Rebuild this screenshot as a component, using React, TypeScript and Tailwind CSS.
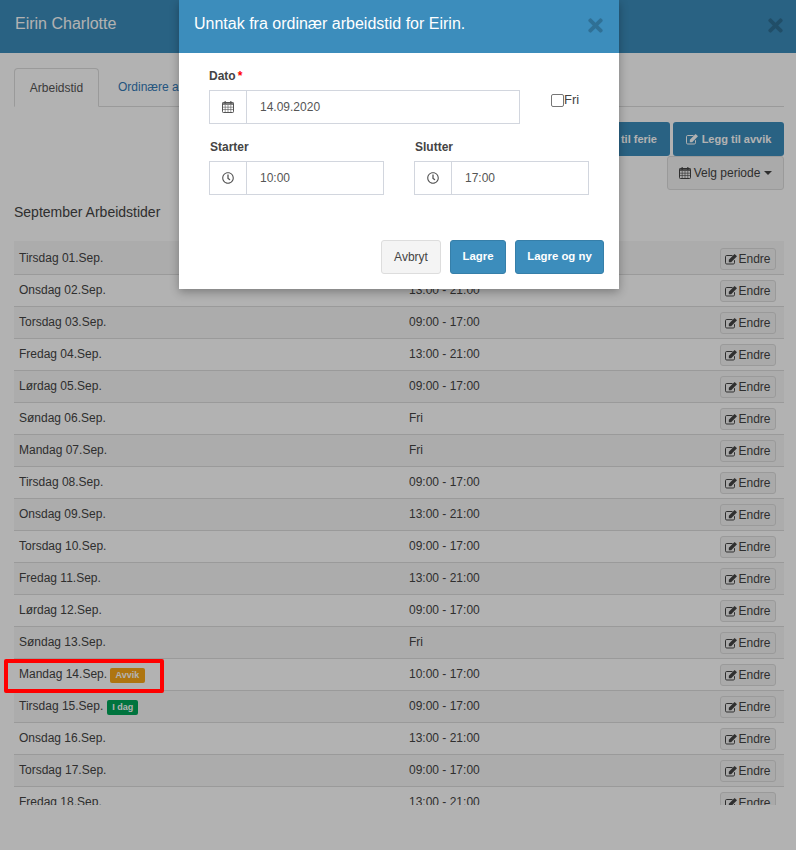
import React from "react";
import { FaRegClock, FaTimes } from "react-icons/fa";

const rows: [string, string, string?][] = [
  ["Tirsdag 01.Sep.", "09:00 - 17:00"],
  ["Onsdag 02.Sep.", "13:00 - 21:00"],
  ["Torsdag 03.Sep.", "09:00 - 17:00"],
  ["Fredag 04.Sep.", "13:00 - 21:00"],
  ["Lørdag 05.Sep.", "09:00 - 17:00"],
  ["Søndag 06.Sep.", "Fri"],
  ["Mandag 07.Sep.", "Fri"],
  ["Tirsdag 08.Sep.", "09:00 - 17:00"],
  ["Onsdag 09.Sep.", "13:00 - 21:00"],
  ["Torsdag 10.Sep.", "09:00 - 17:00"],
  ["Fredag 11.Sep.", "13:00 - 21:00"],
  ["Lørdag 12.Sep.", "09:00 - 17:00"],
  ["Søndag 13.Sep.", "Fri"],
  ["Mandag 14.Sep.", "10:00 - 17:00", "avvik"],
  ["Tirsdag 15.Sep.", "09:00 - 17:00", "idag"],
  ["Onsdag 16.Sep.", "13:00 - 21:00"],
  ["Torsdag 17.Sep.", "09:00 - 17:00"],
  ["Fredag 18.Sep.", "13:00 - 21:00"],
];

function CalendarIcon() {
  return (
    <svg width="12" height="12" viewBox="0 0 12 12" className="shrink-0">
      <rect x="0.5" y="1.5" width="11" height="10" rx="0.8" fill="none" stroke="currentColor" />
      <rect x="0.5" y="1.5" width="11" height="2.5" fill="currentColor" opacity="0.75" />
      <path d="M0.5 6.2H11.5M0.5 8.5H11.5M3.2 4V11.5M6 4V11.5M8.8 4V11.5" stroke="currentColor" strokeWidth="0.8" fill="none" opacity="0.75" />
      <path d="M3.2 0.3V2.8M8.8 0.3V2.8" stroke="currentColor" strokeWidth="1.5" fill="none" />
    </svg>
  );
}

function EditIcon() {
  return (
    <svg width="13" height="12" viewBox="0 0 13 12" className="shrink-0">
      <path d="M9.5 7.2V9.8A1.2 1.2 0 0 1 8.3 11H1.7A1.2 1.2 0 0 1 0.5 9.8V3.7A1.2 1.2 0 0 1 1.7 2.5H7.5" fill="none" stroke="currentColor" />
      <path d="M3.8 6.8L9.6 1L12 3.3L6.2 9.2H3.8Z" fill="currentColor" />
    </svg>
  );
}

function Field({ icon, value, className }: { icon: React.ReactNode; value: string; className: string }) {
  return (
    <div className={`flex h-[34px] border border-[#d2d6de] ${className}`}>
      <div className="flex w-[37px] items-center justify-center border-r border-[#d2d6de] text-[12px] text-[#555555]">{icon}</div>
      <div className="flex items-center pl-[13px] text-[12px] text-[#555555]">{value}</div>
    </div>
  );
}

export default function App() {
  return (
    <div className="relative h-[850px] w-[796px] overflow-hidden bg-white font-['Liberation_Sans',Arial,sans-serif] text-[12px] text-[#444444]">
      <header className="flex h-[53px] items-center justify-between bg-[#3c8dbc] pb-[6px] pl-[15px] pr-[10px] text-white">
        <h1 className="text-[16px] font-normal">Eirin Charlotte</h1>
        <FaTimes className="mt-[4px] text-[21px] text-black opacity-20" />
      </header>

      <div className="px-[14px] pr-[12px]">
        <nav className="mt-[15px] flex h-[39px] border-b border-[#dddddd]">
          <div className="flex h-[39px] w-[85px] items-center justify-center rounded-t border border-b-white border-[#dddddd] bg-white text-[#555555]">Arbeidstid</div>
          <div className="flex h-[38px] items-center pl-[19px] text-[#337ab7]">Ordinære arbeidstider</div>
        </nav>

        <div className="mt-[15px] flex flex-col items-end">
          <div className="flex gap-[3px]">
            <button className="flex h-[34px] w-[120px] items-center justify-end rounded-[3px] bg-[#3c8dbc] pr-[13px] text-[11px] font-bold text-white">Legg til ferie</button>
            <button className="flex h-[34px] w-[111px] items-center justify-center gap-[3px] rounded-[3px] bg-[#3c8dbc] text-[11px] font-bold text-white">
              <EditIcon />
              Legg til avvik
            </button>
          </div>
          <button className="flex h-[34px] w-[117px] items-center justify-center gap-[3px] rounded-[3px] border border-[#dddddd] bg-[#f4f4f4] text-[#444444]">
            <CalendarIcon />
            Velg periode
            <span className="ml-[1px] h-0 w-0 border-x-[4px] border-t-[4px] border-x-transparent border-t-[#444444]" />
          </button>
        </div>

        <h2 className="mt-[14px] text-[14px] font-normal leading-[16px]">September Arbeidstider</h2>

        <div className="mt-[21px] h-[564px] overflow-hidden">
          <div className="h-[2px] bg-[#f7f7f7]" />
          {rows.map(([day, time, tag], i) => (
            <div key={day} className={`flex h-[32px] border-b border-[#dddddd] pl-[5px] pr-[8px] ${i % 2 === 0 ? "bg-[#f7f7f7]" : "bg-white"}`}>
              <div className="flex w-[390px] items-start pt-[8px] leading-[14px]">
                <span>{day}</span>
                {tag === "avvik" && <span className="ml-[3px] mt-[1px] rounded-[2px] bg-[#f9a818] px-[5.5px] py-[1px] text-[9px] font-bold leading-[13px] text-white">Avvik</span>}
                {tag === "idag" && <span className="ml-[4px] mt-[1px] rounded-[2px] bg-[#00a65a] px-[5px] py-[1px] text-[9px] font-bold leading-[13px] text-white">I dag</span>}
              </div>
              <div className="flex-1 pt-[8px] leading-[14px]">{time}</div>
              <button className="mt-[5px] flex h-[22px] w-[56px] items-center justify-center rounded-[3px] border border-[#dddddd] bg-[#f4f4f4] text-[#444444]">
                <EditIcon />
                Endre
              </button>
            </div>
          ))}
        </div>
      </div>

      <div className="absolute inset-0 bg-[rgba(0,0,0,0.3)]" />

      <div className="absolute left-[4px] top-[659px] h-[34px] w-[160px] rounded-[2px] border-[4px] border-[#ff0000]" />

      <div className="absolute left-[179px] top-0 w-[440px] bg-white text-[#333333] shadow-[0_3px_9px_rgba(0,0,0,0.3)]">
        <div className="flex h-[53px] items-center justify-between bg-[#3c8dbc] pb-[6px] pl-[15px] pr-[13px] text-white">
          <h3 className="text-[16px] font-normal">Unntak fra ordinær arbeidstid for Eirin.</h3>
          <FaTimes className="mt-[4px] text-[21px] text-black opacity-20" />
        </div>
        <div className="px-[30px] pt-[16px]">
          <div className="flex">
            <div>
              <label className="block h-[21px] font-bold leading-[14px] text-[#444444]">
                Dato<span className="ml-[2px] text-[#ff0000]">*</span>
              </label>
              <Field icon={<CalendarIcon />} value="14.09.2020" className="w-[311px]" />
            </div>
            <label className="ml-[31px] mt-[24px] flex h-[14px] items-center text-[13px] text-[#444444]">
              <span className="h-[13px] w-[13px] rounded-[2px] border border-[#767676] bg-white" />
              Fri
            </label>
          </div>
          <div className="mt-[16px] flex gap-[30px]">
            <div>
              <label className="block h-[21px] pl-[1px] font-bold leading-[14px] text-[#444444]">Starter</label>
              <Field icon={<FaRegClock />} value="10:00" className="w-[175px]" />
            </div>
            <div>
              <label className="block h-[21px] pl-[1px] font-bold leading-[14px] text-[#444444]">Slutter</label>
              <Field icon={<FaRegClock />} value="17:00" className="w-[175px]" />
            </div>
          </div>
        </div>
        <div className="mt-[45px] flex justify-end gap-[9px] pb-[15px] pr-[15px]">
          <button className="h-[34px] w-[60px] rounded-[3px] border border-[#dddddd] bg-[#f4f4f4] text-[#444444]">Avbryt</button>
          <button className="h-[34px] w-[56px] rounded-[3px] border border-[#367fa9] bg-[#3c8dbc] text-[11.4px] font-bold text-white">Lagre</button>
          <button className="h-[34px] w-[89px] rounded-[3px] border border-[#367fa9] bg-[#3c8dbc] text-[11.4px] font-bold text-white">Lagre og ny</button>
        </div>
      </div>
    </div>
  );
}
